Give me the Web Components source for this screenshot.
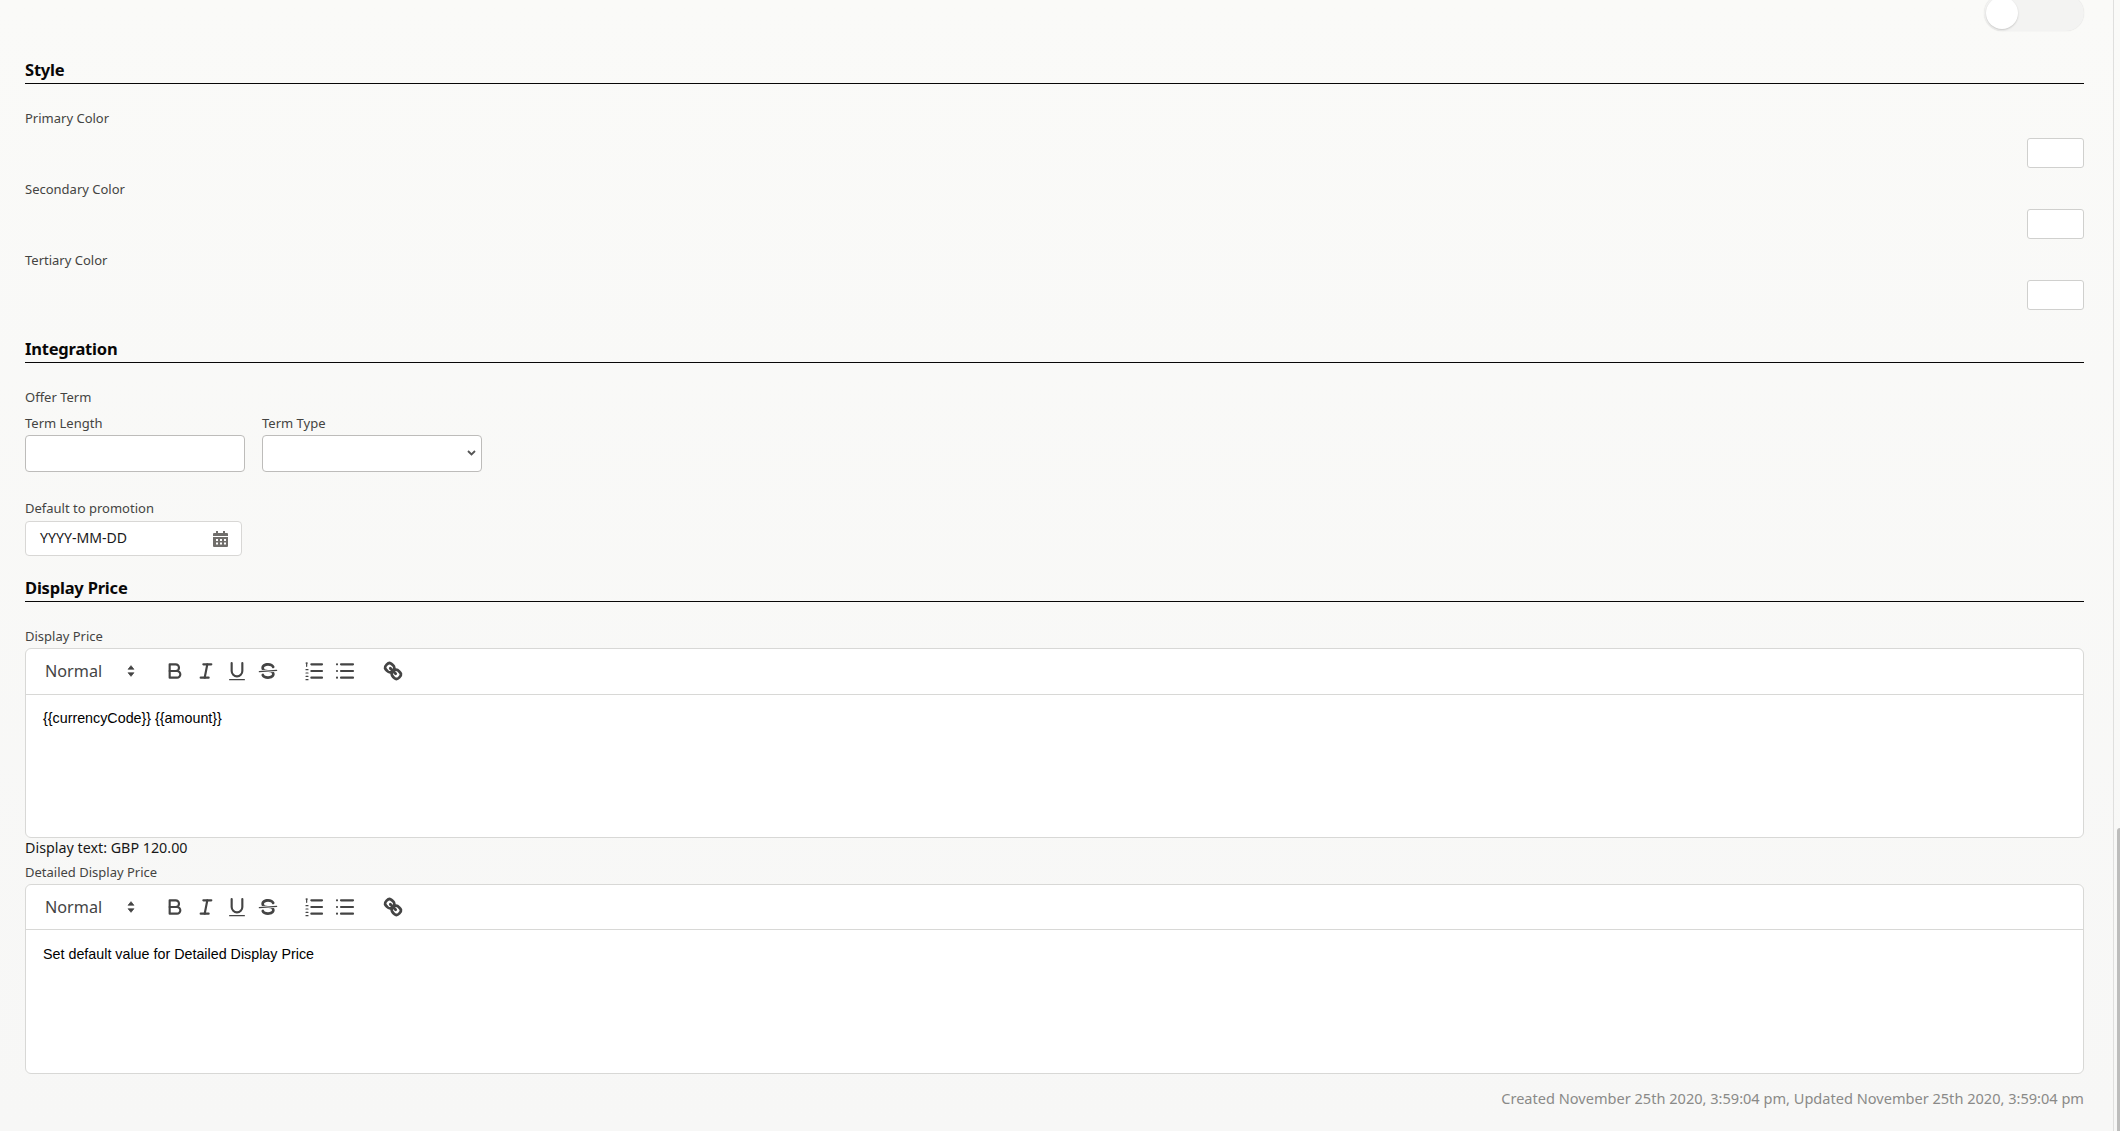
<!DOCTYPE html>
<html lang="en">
<head>
<meta charset="utf-8">
<title>Offer settings</title>
<style>
  html, body { margin: 0; height: 100%; overflow: hidden; }
  body { font-family: "Noto Sans", "Open Sans", sans-serif; color: #3e3e3c; background: #f9f9f7; }
</style>
</head>
<body>

<offer-page>
  <toggle-switch></toggle-switch>

  <form-section heading="Style">
    <color-field label="Primary Color"></color-field>
    <color-field label="Secondary Color"></color-field>
    <color-field label="Tertiary Color"></color-field>
  </form-section>

  <form-section heading="Integration">
    <field-label style="margin-bottom:8px">Offer Term</field-label>
    <term-fields></term-fields>
    <date-field label="Default to promotion" placeholder="YYYY-MM-DD"></date-field>
  </form-section>

  <form-section heading="Display Price" tight>
    <field-label>Display Price</field-label>
    <rich-editor tall>{{currencyCode}} {{amount}}</rich-editor>
    <display-text>Display text: GBP 120.00</display-text>
    <field-label style="margin-top:5px">Detailed Display Price</field-label>
    <rich-editor>Set default value for Detailed Display Price</rich-editor>
  </form-section>

  <audit-line>Created November 25th 2020, 3:59:04 pm, Updated November 25th 2020, 3:59:04 pm</audit-line>
</offer-page>

<script>
// each component: plain class, markup set in the shadow root
class BaseEl extends HTMLElement {
  constructor() {
    super();
    this.attachShadow({ mode: 'open' });
  }
  connectedCallback() {
    this.shadowRoot.innerHTML = this.markup();
  }
}

class OfferPage extends BaseEl {
  markup() {
    return `
      <style>
        :host { display: flex; height: 1131px; overflow: hidden; background: linear-gradient(#fafaf8, #f7f7f6); }
        .content { flex: none; width: 2059px; padding-left: 25px; padding-right: 29px; }
        .rail { flex: none; width: 6px; border-left: 1px solid #dfdfde; position: relative; }
        .thumb { position: absolute; left: 3px; right: 0; top: 828px; bottom: 0; background: #bdbdbc; border-radius: 3px 0 0 0; }
      </style>
      <div class="content"><slot></slot></div>
      <div class="rail"><div class="thumb"></div></div>`;
  }
}

class ToggleSwitch extends BaseEl {
  markup() {
    return `
      <style>
        :host { display: flex; justify-content: flex-end; height: 31px; }
        .track { width: 100px; height: 36px; margin-top: -5px; border-radius: 18px; background: #f3f3f2; box-shadow: 0 0 1px #d8d8d6; display: flex; align-items: center; padding-left: 2px; box-sizing: border-box; }
        .knob { width: 32px; height: 32px; border-radius: 50%; background: #fff; box-shadow: 0 1px 2px rgba(0,0,0,.18); }
      </style>
      <div class="track"><div class="knob"></div></div>`;
  }
}

class FormSection extends BaseEl {
  markup() {
    return `
      <style>
        :host { display: block; margin-top: 27px; }
        :host([tight]) { margin-top: 20px; }
        h2 { margin: 0 0 25px; height: 25px; line-height: 24px; border-bottom: 1px solid #080707; font-size: 16.5px; font-weight: 700; letter-spacing: -0.2px; color: #080707; }
      </style>
      <h2>${this.getAttribute('heading')}</h2>
      <slot></slot>`;
  }
}

class FieldLabel extends BaseEl {
  markup() {
    return `
      <style>
        :host { display: block; height: 18px; line-height: 18px; font-size: 13px; color: #444442; }
      </style>
      <slot></slot>`;
  }
}

class ColorField extends BaseEl {
  markup() {
    return `
      <style>
        :host { display: block; margin-bottom: 12px; }
        .row { display: flex; justify-content: flex-end; margin-top: 11px; }
        .box { width: 57px; height: 30px; box-sizing: border-box; background: #fff; border: 1px solid #d0d0ce; border-radius: 3px; }
      </style>
      <field-label>${this.getAttribute('label')}</field-label>
      <div class="row"><div class="box"></div></div>`;
  }
}

class TermFields extends BaseEl {
  markup() {
    return `
      <style>
        :host { display: flex; gap: 17px; }
        .col { width: 220px; }
        .wrap { position: relative; margin-top: 3px; }
        input, select { display: block; width: 100%; height: 37px; box-sizing: border-box; background: #fff; border: 1px solid #bdbcba; border-radius: 4px; font: inherit; appearance: none; }
        input { margin-top: 3px; }
        svg { position: absolute; right: 6px; top: 15px; width: 9px; height: 6px; fill: none; stroke: #555; stroke-width: 1.8; }
      </style>
      <div class="col"><field-label>Term Length</field-label><input type="text"></div>
      <div class="col"><field-label>Term Type</field-label>
        <div class="wrap"><select><option></option></select><svg viewBox="0 0 9 6"><path d="M1 1l3.5 3.5L8 1"/></svg></div>
      </div>`;
  }
}

class DateField extends BaseEl {
  markup() {
    return `
      <style>
        :host { display: block; margin-top: 27px; }
        .box { width: 217px; height: 35px; margin-top: 4px; box-sizing: border-box; display: flex; align-items: center; justify-content: space-between; padding: 0 13px 0 14px; background: #fff; border: 1px solid #d8d7d5; border-radius: 4px; font-size: 14.1px; color: #181818; }
        span { position: relative; top: -1px; }
        svg { width: 15px; height: 16px; }
      </style>
      <field-label>${this.getAttribute('label')}</field-label>
      <div class="box">
        <span>${this.getAttribute('placeholder')}</span>
        <svg viewBox="0 0 15 16" fill="#706e6b">
          <rect x="3" y="0" width="2" height="3"/><rect x="10" y="0" width="2" height="3"/>
          <path d="M1 2h13a1 1 0 0 1 1 1v2H0V3a1 1 0 0 1 1-1z"/>
          <path fill-rule="evenodd" d="M0 6h15v9a1 1 0 0 1-1 1H1a1 1 0 0 1-1-1zM3 8v2h2V8zm4 0v2h2V8zm4 0v2h2V8zM3 11.5v2h2v-2zm4 0v2h2v-2zm4 0v2h2v-2z"/>
        </svg>
      </div>`;
  }
}

class RichEditor extends BaseEl {
  markup() {
    const icon = (body) => `<button><svg viewBox="0 0 18 18">${body}</svg></button>`;
    return `
      <style>
        :host { display: block; height: 190px; margin-top: 3px; box-sizing: border-box; background: #fff; border: 1px solid #d8d8d6; border-radius: 6px; }
        .bar { display: flex; align-items: center; height: 45px; padding: 0 0 1px 10px; box-sizing: border-box; border-bottom: 1px solid #d8d8d6; }
        :host([tall]) .bar { height: 46px; padding-bottom: 2px; }
        :host([tall]) .text { margin-top: 13px; }
        .picker { width: 107px; margin-right: 16px; padding-left: 9px; box-sizing: border-box; display: flex; align-items: center; justify-content: space-between; font-size: 16.2px; color: #444; }
        .picker svg { width: 24px; height: 24px; }
        .group { display: flex; margin-right: 15.5px; }
        .group.last { margin-left: 1px; }
        button { all: unset; width: 31px; height: 31px; display: flex; align-items: center; justify-content: center; }
        button svg { width: 24px; height: 24px; }
        svg { fill: none; stroke: #444; stroke-width: 1.6; stroke-linecap: round; stroke-linejoin: round; }
        .thin { stroke-width: .9; }
        .heavy { stroke-width: 2.1; }
        .dot { fill: #444; stroke: none; }
        .arrow { fill: #444; stroke: #444; stroke-width: .6; }
        .text { padding-left: 17px; margin-top: 14px; font-family: "Liberation Sans", Arial, sans-serif; font-size: 14.3px; line-height: 20px; color: #000; }
      </style>
      <div class="bar">
        <div class="picker"><span>Normal</span>
          <svg viewBox="0 0 18 18"><polygon class="arrow" points="7 10.5 9 13 11 10.5"/><polygon class="arrow" points="7 7.5 9 5 11 7.5"/></svg>
        </div>
        <div class="group">
          ${icon('<path d="M5,4H9.5A2.5,2.5,0,0,1,12,6.5v0A2.5,2.5,0,0,1,9.5,9H5V4Z"/><path d="M5,9h5.5A2.5,2.5,0,0,1,13,11.5v0A2.5,2.5,0,0,1,10.5,14H5V9Z"/>')}
          ${icon('<line x1="7" x2="13" y1="4" y2="4"/><line x1="5" x2="11" y1="14" y2="14"/><line x1="8" x2="10" y1="14" y2="4"/>')}
          ${icon('<path d="M5,3V9a4,4,0,0,0,4,4h0a4,4,0,0,0,4-4V3"/><rect class="dot" x="3" y="15" width="12" height="1" rx=".5" ry=".5"/>')}
          ${icon('<line class="thin" x1="15.5" x2="2.5" y1="8.5" y2="9.5"/><path class="dot" d="M9.007,8C6.542,7.791,6,7.519,6,6.5,6,5.792,7.283,5,9,5c1.571,0,2.765.679,2.969,1.309a1,1,0,0,0,1.9-.617C13.356,4.106,11.354,3,9,3,6.2,3,4,4.538,4,6.5a3.2,3.2,0,0,0,.5,1.843Z"/><path class="dot" d="M8.984,10C11.457,10.208,12,10.479,12,11.5c0,.708-1.283,1.5-3,1.5-1.571,0-2.765-.679-2.969-1.309a1,1,0,1,0-1.9.617C4.644,13.894,6.646,15,9,15c2.8,0,5-1.538,5-3.5a3.2,3.2,0,0,0-.5-1.843Z"/>')}
        </div>
        <div class="group">
          ${icon('<line x1="7" x2="15" y1="4" y2="4"/><line x1="7" x2="15" y1="9" y2="9"/><line x1="7" x2="15" y1="14" y2="14"/><line class="thin" x1="3" x2="4" y1="3" y2="3"/><line class="thin" x1="3.5" x2="3.5" y1="3" y2="5.5"/><line class="thin" x1="3" x2="4.5" y1="8" y2="8"/><line class="thin" x1="3" x2="4.5" y1="10.5" y2="10.5"/><line class="thin" x1="3" x2="4.5" y1="13" y2="13"/><line class="thin" x1="3" x2="4.5" y1="15.5" y2="15.5"/>')}
          ${icon('<line x1="6" x2="15" y1="4" y2="4"/><line x1="6" x2="15" y1="9" y2="9"/><line x1="6" x2="15" y1="14" y2="14"/><line x1="3" x2="3" y1="4" y2="4"/><line x1="3" x2="3" y1="9" y2="9"/><line x1="3" x2="3" y1="14" y2="14"/>')}
        </div>
        <div class="group last">
          ${icon('<line class="heavy" x1="7" x2="11" y1="7" y2="11"/><path class="heavy" d="M8.9,4.577a3.476,3.476,0,0,1,.36,4.679A3.476,3.476,0,0,1,4.577,8.9C3.185,7.5,2.035,6.4,4.217,4.217S7.5,3.185,8.9,4.577Z"/><path class="heavy" d="M13.423,9.1a3.476,3.476,0,0,0-4.679-.36,3.476,3.476,0,0,0,.36,4.679c1.392,1.392,2.5,2.542,4.679.36S14.815,10.5,13.423,9.1Z"/>')}
        </div>
      </div>
      <div class="text"><slot></slot></div>`;
  }
}

class DisplayText extends BaseEl {
  markup() {
    return `
      <style>
        :host { display: block; height: 20px; line-height: 20px; font-size: 14.3px; color: #181818; }
      </style>
      <slot></slot>`;
  }
}

class AuditLine extends BaseEl {
  markup() {
    return `
      <style>
        :host { display: block; margin-top: 14px; height: 20px; line-height: 20px; text-align: right; font-size: 14.57px; color: #8a8a88; }
      </style>
      <slot></slot>`;
  }
}

customElements.define('offer-page', OfferPage);
customElements.define('toggle-switch', ToggleSwitch);
customElements.define('form-section', FormSection);
customElements.define('field-label', FieldLabel);
customElements.define('color-field', ColorField);
customElements.define('term-fields', TermFields);
customElements.define('date-field', DateField);
customElements.define('rich-editor', RichEditor);
customElements.define('display-text', DisplayText);
customElements.define('audit-line', AuditLine);
</script>
</body>
</html>
